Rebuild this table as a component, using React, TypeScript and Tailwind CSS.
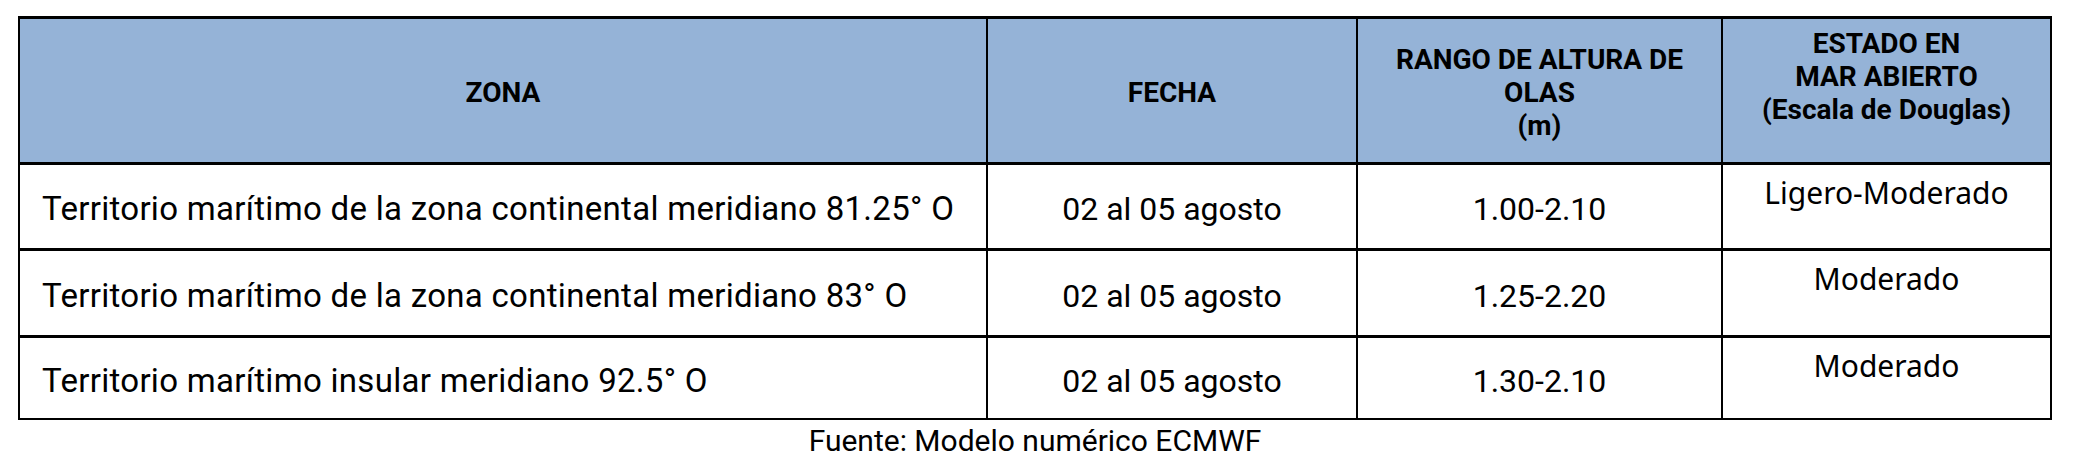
const rows = [
  {
    zona: 'Territorio marítimo de la zona continental meridiano 81.25° O',
    fecha: '02 al 05 agosto',
    rango: '1.00-2.10',
    estado: 'Ligero-Moderado',
    h: 'h-[86px]',
  },
  {
    zona: 'Territorio marítimo de la zona continental meridiano 83° O',
    fecha: '02 al 05 agosto',
    rango: '1.25-2.20',
    estado: 'Moderado',
    h: 'h-[87px]',
  },
  {
    zona: 'Territorio marítimo insular meridiano 92.5° O',
    fecha: '02 al 05 agosto',
    rango: '1.30-2.10',
    estado: 'Moderado',
    h: 'h-[83px]',
  },
]

export default function App() {
  return (
    <div className="min-h-screen w-[2076px] bg-white pl-[18px] pt-[16px] font-['Roboto',sans-serif] text-black">
      <div className="w-[2034px] border-x-2 border-t-[3px] border-b-2 border-black">
        {/* Header */}
        <div className="grid h-[143px] grid-cols-[966px_370px_365px_329px] bg-[#95b3d7] text-center text-[28px] font-bold leading-[33px]">
          <div className="flex items-center justify-center pt-[4px]">ZONA</div>
          <div className="flex items-center justify-center border-l-2 border-black pt-[4px]">FECHA</div>
          <div className="flex items-center justify-center border-l-2 border-black pt-[4px]">
            RANGO DE ALTURA DE
            <br />
            OLAS
            <br />
            (m)
          </div>
          <div className="border-l-2 border-black pt-[8px]">
            ESTADO EN
            <br />
            MAR ABIERTO
            <br />
            (Escala de Douglas)
          </div>
        </div>

        {/* Body rows */}
        {rows.map((r, i) => (
          <div
            key={i}
            className={`grid ${r.h} grid-cols-[966px_370px_365px_329px] border-t-[3px] border-black text-[32px] leading-[40px]`}
          >
            <div className="flex items-center whitespace-nowrap pl-[22px] pt-[5px] text-[33px] tracking-[0.3px]">
              {r.zona}
            </div>
            <div className="flex items-center justify-center border-l-2 border-black pt-[5px]">{r.fecha}</div>
            <div className="flex items-center justify-center border-l-2 border-black pt-[5px]">{r.rango}</div>
            <div className="border-l-2 border-black pt-[8px] text-center font-['Noto_Sans',sans-serif] text-[30px] leading-[40px]">
              {r.estado}
            </div>
          </div>
        ))}
      </div>
      <p className="w-[2034px] pt-[1px] text-center text-[30px] leading-[40px]">Fuente: Modelo numérico ECMWF</p>
    </div>
  )
}
